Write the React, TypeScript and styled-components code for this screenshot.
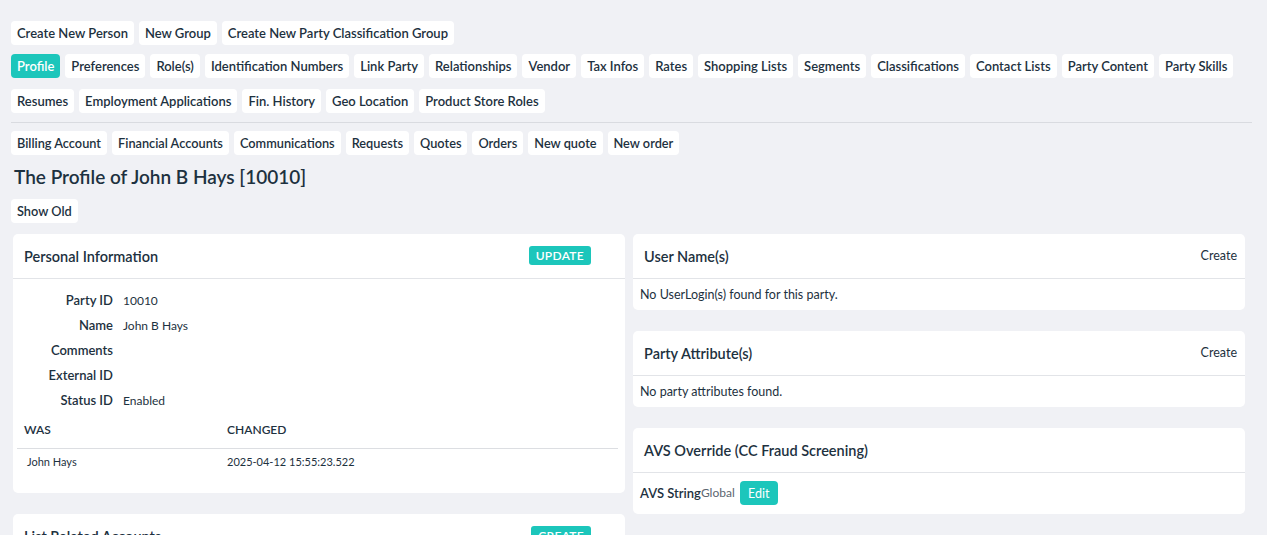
import styled, { createGlobalStyle } from "styled-components";

const GlobalStyle = createGlobalStyle`
  body {
    margin: 0;
    background: #f0f1f5;
    font-family: "Lato", "Noto Sans", sans-serif;
    color: #1d3140;
  }
  * { box-sizing: border-box; }
`;

const Page = styled.div`
  padding: 21px 15px 0 11px;
  height: 535px;
  overflow: hidden;
`;

const ButtonRow = styled.div<{ $mb?: number }>`
  display: flex;
  flex-wrap: wrap;
  gap: 11px 5px;
  margin-bottom: ${(p) => p.$mb ?? 0}px;
`;

const NavButton = styled.button<{ $active?: boolean; $small?: boolean }>`
  height: 24px;
  padding: 0 6px;
  border: none;
  border-radius: 4px;
  background: ${(p) => (p.$active ? "#1cc6bb" : "#ffffff")};
  color: ${(p) => (p.$active ? "#ffffff" : "#1d3140")};
  font-family: inherit;
  font-size: ${(p) => (p.$small ? "12.75px" : "13px")};
  font-weight: 600;
  line-height: 24px;
  cursor: pointer;
  white-space: nowrap;
`;

const Divider = styled.hr`
  border: none;
  border-top: 1px solid #d9dbe0;
  margin: 9px 0 8px;
`;

const Title = styled.h2`
  margin: 9px 0 9px 3px;
  font-size: 19px;
  font-weight: 600;
  line-height: 26px;
  color: #1d3140;
`;

const Columns = styled.div`
  display: grid;
  grid-template-columns: 1fr 1fr;
  column-gap: 8px;
  margin: 11px 7px 0 2px;
  align-items: start;
`;

const Stack = styled.div`
  display: flex;
  flex-direction: column;
  gap: 21px;
`;

const Card = styled.section`
  background: #ffffff;
  border-radius: 5px;
`;

const CardHeader = styled.div`
  height: 45px;
  display: flex;
  align-items: center;
  justify-content: space-between;
  padding: 0 8px 0 11px;
  border-bottom: 1px solid #e2e4e8;
`;

const CardTitle = styled.h3`
  margin: 0;
  font-size: 14.5px;
  font-weight: 600;
  color: #1d3140;
`;

const TealButton = styled.button<{ $mr?: number }>`
  height: 19px;
  padding: 0 7px;
  margin-right: ${(p) => p.$mr ?? 0}px;
  border: none;
  border-radius: 3px;
  background: #1cc6bb;
  color: #ffffff;
  font-family: inherit;
  font-size: 12px;
  font-weight: 600;
  letter-spacing: 0.3px;
  margin-top: -2px;
`;

const HeaderLink = styled.span`
  font-size: 12.5px;
  color: #1d3140;
  margin-top: -2px;
`;

const CardBody = styled.div<{ $pad?: string }>`
  padding: ${(p) => p.$pad ?? "9px 7px 8px"};
  font-size: 12.5px;
  line-height: 14px;
  color: #1d3140;
`;

const InfoGrid = styled.div`
  display: grid;
  grid-template-columns: 89px 1fr;
  column-gap: 10px;
  padding: 9px 0 0 0;
`;

const InfoLabel = styled.div`
  text-align: right;
  font-size: 13px;
  font-weight: 600;
  line-height: 25px;
`;

const InfoValue = styled.div`
  font-size: 12px;
  line-height: 25px;
`;

const Table = styled.table`
  border-collapse: collapse;
  width: 601px;
  margin: 0 0 0 -7px;
  font-size: 11px;
`;

const Th = styled.th<{ $w?: number }>`
  text-align: left;
  font-weight: 600;
  font-size: 12px;
  padding: 0 7px;
  height: 35px;
  width: ${(p) => (p.$w ? `${p.$w}px` : "auto")};
  border-bottom: 1px solid #dcdee2;
`;

const Td = styled.td<{ $indent?: number }>`
  padding: 0 7px 0 ${(p) => 7 + (p.$indent ?? 0)}px;
  height: 28px;
  line-height: 14px;
`;

const Inline = styled.div`
  display: flex;
  align-items: center;
`;

const Strong = styled.span`
  font-weight: 600;
  font-size: 13px;
`;

const Muted = styled.span`
  color: #5b6670;
  font-size: 12px;
`;

const EditButton = styled.button`
  height: 24px;
  width: 38px;
  padding: 0;
  border: none;
  border-radius: 4px;
  background: #1cc6bb;
  color: #ffffff;
  font-family: inherit;
  font-size: 12.5px;
  margin-left: 5px;
`;

const ListPlaceholder = styled.div`
  height: 60px;
`;

const topRow = ["Create New Person", "New Group", "Create New Party Classification Group"];
const tabs = [
  "Profile", "Preferences", "Role(s)", "Identification Numbers", "Link Party", "Relationships",
  "Vendor", "Tax Infos", "Rates", "Shopping Lists", "Segments", "Classifications", "Contact Lists",
  "Party Content", "Party Skills", "Resumes", "Employment Applications", "Fin. History",
  "Geo Location", "Product Store Roles",
];
const subTabs = [
  "Billing Account", "Financial Accounts", "Communications", "Requests", "Quotes", "Orders",
  "New quote", "New order",
];

const info = [
  ["Party ID", "10010"],
  ["Name", "John B Hays"],
  ["Comments", ""],
  ["External ID", ""],
  ["Status ID", "Enabled"],
];

export default function App() {
  return (
    <>
      <GlobalStyle />
      <Page>
        <ButtonRow $mb={9}>
          {topRow.map((t) => (
            <NavButton key={t}>{t}</NavButton>
          ))}
        </ButtonRow>
        <ButtonRow>
          {tabs.map((t) => (
            <NavButton key={t} $active={t === "Profile"}>{t}</NavButton>
          ))}
        </ButtonRow>
        <Divider />
        <ButtonRow>
          {subTabs.map((t) => (
            <NavButton key={t} $small>{t}</NavButton>
          ))}
        </ButtonRow>
        <Title>The Profile of John B Hays [10010]</Title>
        <NavButton $small>Show Old</NavButton>

        <Columns>
          <Stack>
            <Card>
              <CardHeader>
                <CardTitle>Personal Information</CardTitle>
                <TealButton $mr={26}>UPDATE</TealButton>
              </CardHeader>
              <CardBody $pad="0 7px 17px 11px">
                <InfoGrid>
                  {info.map(([l, v]) => (
                    <>
                      <InfoLabel key={l}>{l}</InfoLabel>
                      <InfoValue key={l + "v"}>{v}</InfoValue>
                    </>
                  ))}
                </InfoGrid>
                <Table>
                  <thead>
                    <tr>
                      <Th $w={203}>WAS</Th>
                      <Th>CHANGED</Th>
                    </tr>
                  </thead>
                  <tbody>
                    <tr>
                      <Td $indent={3}>John Hays</Td>
                      <Td>2025-04-12 15:55:23.522</Td>
                    </tr>
                  </tbody>
                </Table>
              </CardBody>
            </Card>
            <Card>
              <CardHeader>
                <CardTitle>List Related Accounts</CardTitle>
                <TealButton $mr={26}>CREATE</TealButton>
              </CardHeader>
              <ListPlaceholder />
            </Card>
          </Stack>

          <Stack>
            <Card>
              <CardHeader>
                <CardTitle>User Name(s)</CardTitle>
                <HeaderLink>Create</HeaderLink>
              </CardHeader>
              <CardBody>No UserLogin(s) found for this party.</CardBody>
            </Card>
            <Card>
              <CardHeader>
                <CardTitle>Party Attribute(s)</CardTitle>
                <HeaderLink>Create</HeaderLink>
              </CardHeader>
              <CardBody>No party attributes found.</CardBody>
            </Card>
            <Card>
              <CardHeader>
                <CardTitle>AVS Override (CC Fraud Screening)</CardTitle>
              </CardHeader>
              <CardBody $pad="8px 7px 9px">
                <Inline>
                  <Strong>AVS String</Strong>
                  <Muted>Global</Muted>
                  <EditButton>Edit</EditButton>
                </Inline>
              </CardBody>
            </Card>
          </Stack>
        </Columns>
      </Page>
    </>
  );
}
